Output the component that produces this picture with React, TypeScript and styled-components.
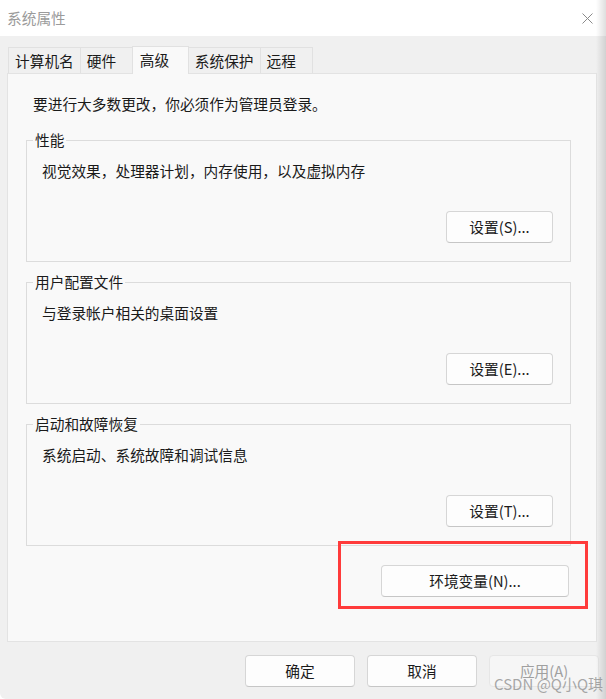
import React from "react";
import styled, { createGlobalStyle } from "styled-components";

const GlobalStyle = createGlobalStyle`
  html, body { margin: 0; padding: 0; background: #ffffff; }
  body {
    font-family: "Noto Sans CJK SC", "Noto Sans", sans-serif;
    font-size: 14.7px;
    color: #1a1a1a;
  }
  * { box-sizing: border-box; }
`;

const Window = styled.div`
  position: relative;
  width: 606px;
  height: 699px;
  background: #f0f0f0;
  display: flex;
  flex-direction: column;
  overflow: hidden;
  border-bottom-left-radius: 6px;
  &::after {
    content: "";
    position: absolute;
    top: 0;
    right: 0;
    bottom: 0;
    width: 10px;
    background: linear-gradient(to right, rgba(0, 0, 0, 0), rgba(0, 0, 0, 0.13));
    pointer-events: none;
  }
`;

const TitleBar = styled.div`
  height: 36px;
  flex: none;
  background: #ffffff;
  display: flex;
  align-items: center;
  justify-content: space-between;
  padding: 0 13px 0 7px;
`;

const Title = styled.span`
  color: #9b9b9b;
  line-height: 20px;
`;

const CloseIcon = styled.svg`
  width: 11px;
  height: 11px;
  display: block;
`;

const Body = styled.div`
  padding-top: 10px;
  display: flex;
  flex-direction: column;
  flex: 1;
`;

const TabRow = styled.div`
  display: flex;
  align-items: flex-end;
  height: 28px;
  padding-left: 8px;
  margin-bottom: -1px;
  position: relative;
  z-index: 1;
`;

const Tab = styled.div<{ $active?: boolean }>`
  display: flex;
  align-items: center;
  line-height: 20px;
  border: 1px solid #e1e1e1;
  border-bottom: none;
  margin-left: -1px;
  &:first-child { margin-left: 0; }
  background: ${(p) => (p.$active ? "#f9f9f9" : "#f0f0f0")};
  height: ${(p) => (p.$active ? "28px" : "26px")};
  margin-bottom: ${(p) => (p.$active ? "0" : "1px")};
  min-width: ${(p) => (p.$active ? "57px" : "53px")};
  padding: ${(p) => (p.$active ? "0 6px 2px 7px" : "0 6px")};
  color: #1a1a1a;
`;

const Panel = styled.div`
  margin: 0 9px 0 7px;
  height: 569px;
  background: #f9f9f9;
  border: 1px solid #e3e3e3;
  padding: 20px 25px 0 18px;
  display: flex;
  flex-direction: column;
`;

const Intro = styled.div`
  line-height: 20px;
  margin-left: 7px;
`;

const Groups = styled.div`
  display: flex;
  flex-direction: column;
  gap: 10px;
  margin-top: 16px;
`;

const Group = styled.fieldset`
  margin: 0;
  min-width: 0;
  border: 1px solid #dcdcdc;
  padding: 0 17px 18px 15px;
`;

const Legend = styled.legend`
  padding: 0 2px;
  margin-left: -9px;
  line-height: 20px;
`;

const Description = styled.div`
  margin-top: 11px;
  line-height: 20px;
`;

const ButtonRow = styled.div<{ $top: number; $right?: number }>`
  display: flex;
  justify-content: flex-end;
  margin-top: ${(p) => p.$top}px;
  padding-right: ${(p) => p.$right ?? 0}px;
`;

const Button = styled.button<{ $width: number }>`
  width: ${(p) => p.$width}px;
  height: 32px;
  flex: none;
  font-family: inherit;
  font-size: 14.7px;
  line-height: 20px;
  color: #1b1b1b;
  background: #fdfdfd;
  border: 1px solid #d6d6d6;
  border-bottom-color: #c6c6c6;
  border-radius: 4px;
  padding: 0;
  &:disabled {
    color: #a0a0a0;
    background: #f6f6f6;
    border-color: #e6e6e6;
  }
`;

const Highlight = styled.div`
  position: relative;
  display: flex;
`;

const RedFrame = styled.div`
  position: absolute;
  left: -43px;
  top: -24px;
  width: 250px;
  height: 68px;
  border: 3px solid #ff3b3b;
  pointer-events: none;
`;

const Footer = styled.div`
  display: flex;
  justify-content: flex-end;
  gap: 12px;
  padding: 13px 7px 0 0;
`;

const Watermark = styled.div`
  position: absolute;
  left: 494px;
  top: 674px;
  line-height: 20px;
  font-size: 15px;
  color: rgba(140, 140, 140, 0.75);
  pointer-events: none;
  z-index: 2;
`;

const groups = [
  { title: "性能", desc: "视觉效果，处理器计划，内存使用，以及虚拟内存", button: "设置(S)..." },
  { title: "用户配置文件", desc: "与登录帐户相关的桌面设置", button: "设置(E)..." },
  { title: "启动和故障恢复", desc: "系统启动、系统故障和调试信息", button: "设置(T)..." },
];

const tabs = ["计算机名", "硬件", "高级", "系统保护", "远程"];

export default function App() {
  return (
    <>
      <GlobalStyle />
      <Window>
        <TitleBar>
          <Title>系统属性</Title>
          <CloseIcon viewBox="0 0 11 11">
            <path d="M0.5 0.5 L10.5 10.5 M10.5 0.5 L0.5 10.5" stroke="#8a8a8a" strokeWidth="1" fill="none" />
          </CloseIcon>
        </TitleBar>
        <Body>
          <TabRow>
            {tabs.map((t) => (
              <Tab key={t} $active={t === "高级"}>
                {t}
              </Tab>
            ))}
          </TabRow>
          <Panel>
            <Intro>要进行大多数更改，你必须作为管理员登录。</Intro>
            <Groups>
              {groups.map((g) => (
                <Group key={g.title}>
                  <Legend>{g.title}</Legend>
                  <Description>{g.desc}</Description>
                  <ButtonRow $top={30}>
                    <Button $width={107}>{g.button}</Button>
                  </ButtonRow>
                </Group>
              ))}
            </Groups>
            <ButtonRow $top={19} $right={2}>
              <Highlight>
                <RedFrame />
                <Button $width={188}>环境变量(N)...</Button>
              </Highlight>
            </ButtonRow>
          </Panel>
          <Footer>
            <Button $width={110}>确定</Button>
            <Button $width={110}>取消</Button>
            <Button $width={110} disabled>
              应用(A)
            </Button>
          </Footer>
        </Body>
        <Watermark>CSDN @Q小Q琪</Watermark>
      </Window>
    </>
  );
}
